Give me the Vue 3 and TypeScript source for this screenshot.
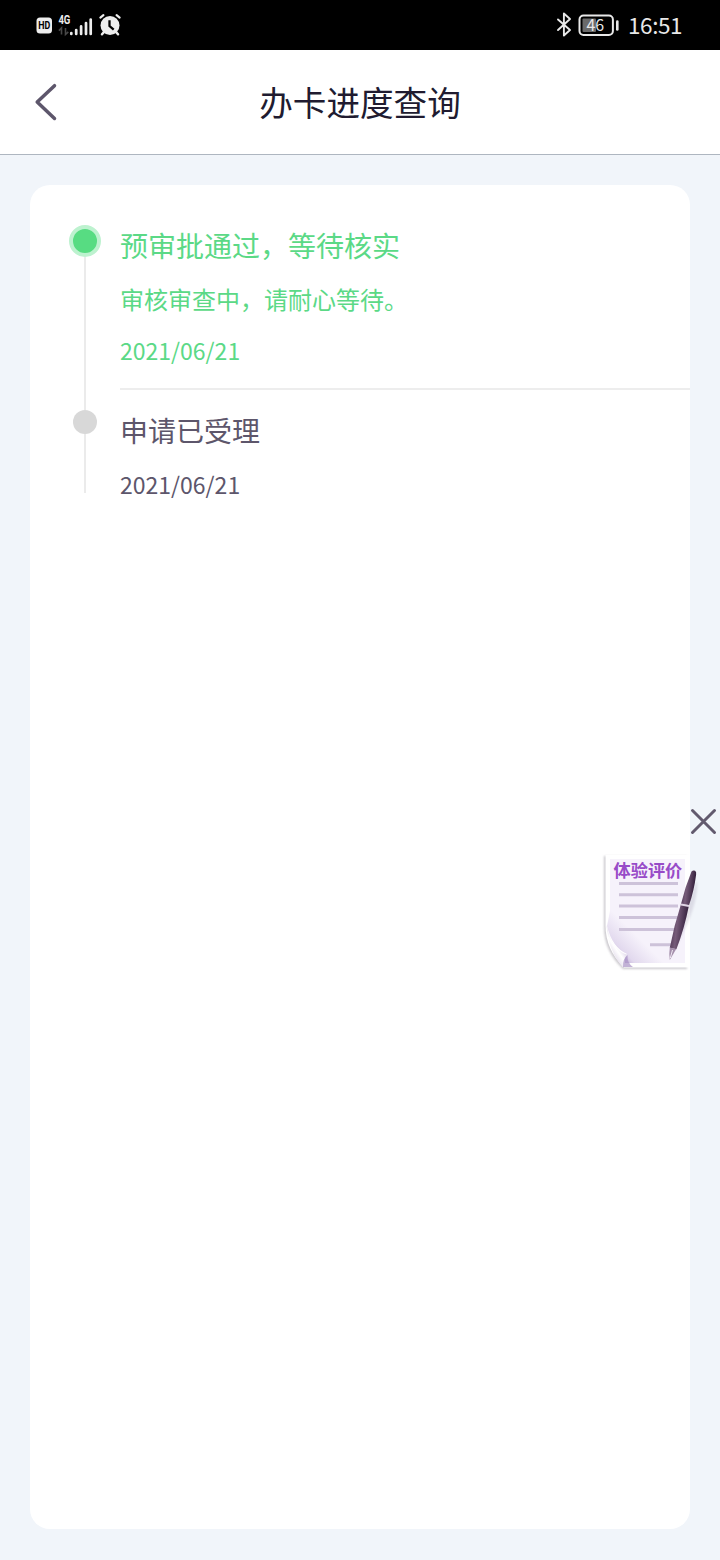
<script setup lang="ts">
import { ref } from 'vue'

interface Step {
  title: string
  detail?: string
  date: string
  active: boolean
}

const steps: Step[] = [
  { title: '预审批通过，等待核实', detail: '审核审查中，请耐心等待。', date: '2021/06/21', active: true },
  { title: '申请已受理', date: '2021/06/21', active: false },
]

const surveyVisible = ref(true)
</script>

<template>
  <div class="screen">
    <div class="status">
      <svg class="status-left" width="90" height="30" viewBox="0 0 90 30">
        <rect x="0.5" y="7.5" width="15.5" height="16" rx="3.5" fill="#ededed" />
        <text x="8.2" y="19" text-anchor="middle" class="hd" textLength="12" lengthAdjust="spacingAndGlyphs">HD</text>
        <text x="22.4" y="13.6" class="net" textLength="12" lengthAdjust="spacingAndGlyphs">4G</text>
        <path d="M25.5 24.5v-6.5l-2.6 2.6M29.5 18v6.5l2.8-2.6" fill="none" stroke="#484848" stroke-width="1.6" />
        <path d="M35.3 24v-1M40.2 24v-4M45.1 24v-7.6M50 24v-11M54.7 24v-14.5" stroke="#ededed" stroke-width="2.7" stroke-linecap="round" />
        <circle cx="74" cy="15.5" r="9.5" fill="#ededed" />
        <path d="M68 22l-2 2.3M80 22l2 2.3" stroke="#ededed" stroke-width="2.5" stroke-linecap="round" />
        <path d="M64.4 7.6l3-2.4M83.6 7.6l-3-2.4" fill="none" stroke="#ededed" stroke-width="2.2" stroke-linecap="round" />
        <path d="M73.5 10.3v5.7l4.2 3.7" fill="none" stroke="#000" stroke-width="2.3" />
      </svg>
      <div class="status-right">
        <svg width="64" height="30" viewBox="0 0 64 30">
          <path d="M2 9.5l12 10.5-6.1 5.5v-22l6.1 5.5-12 11" fill="none" stroke="#e8e8e8" stroke-width="1.9" stroke-linejoin="round" stroke-linecap="round" />
          <rect x="23.5" y="5.6" width="33.4" height="19.4" rx="4" fill="none" stroke="#e8e8e8" stroke-width="2" />
          <rect x="26.5" y="8.6" width="13.5" height="13.4" rx="1" fill="#6a6a6a" />
          <path d="M61.3 11.5v8" stroke="#e8e8e8" stroke-width="2.6" stroke-linecap="round" />
          <text x="39.3" y="21" text-anchor="middle" class="charge">46</text>
        </svg>
        <span class="clock">16:51</span>
      </div>
    </div>

    <header class="nav">
      <svg class="back" width="24" height="40" viewBox="0 0 24 40">
        <path d="M20.5 3.7L3.2 20l17.3 16.5" fill="none" stroke="#5d566b" stroke-width="3.5" stroke-linecap="round" stroke-linejoin="round" />
      </svg>
      <h1>办卡进度查询</h1>
    </header>

    <main class="body">
      <ol class="card">
        <li v-for="step in steps" :key="step.title" class="step" :class="{ active: step.active }">
          <div class="marker">
            <i class="dot"></i>
            <i class="rail"></i>
          </div>
          <div class="info">
            <h2>{{ step.title }}</h2>
            <p v-if="step.detail" class="detail">{{ step.detail }}</p>
            <time>{{ step.date }}</time>
          </div>
        </li>
      </ol>
    </main>

    <div v-if="surveyVisible" class="survey">
      <svg class="close" width="28" height="28" viewBox="0 0 28 28" @click="surveyVisible = false">
        <path d="M3.5 3.5l22 22M25.5 3.5l-22 22" stroke="#625a6e" stroke-width="3" stroke-linecap="round" />
      </svg>
      <svg class="paper" width="120" height="130" viewBox="600 845 120 130">
        <defs>
          <linearGradient id="sheet" gradientUnits="userSpaceOnUse" x1="608" y1="955" x2="632" y2="931">
            <stop offset="0" stop-color="#a58dc4" />
            <stop offset="0.4" stop-color="#e2d9ee" />
            <stop offset="1" stop-color="#f6f2fb" />
          </linearGradient>
          <linearGradient id="fold" gradientUnits="userSpaceOnUse" x1="610" y1="957" x2="626" y2="946">
            <stop offset="0" stop-color="#d9d0e4" />
            <stop offset="0.5" stop-color="#fff" />
            <stop offset="1" stop-color="#cbbedb" />
          </linearGradient>
          <linearGradient id="barrel" x1="0" y1="0" x2="1" y2="0.25">
            <stop offset="0" stop-color="#3d2845" />
            <stop offset="0.45" stop-color="#765b79" />
            <stop offset="1" stop-color="#2f1b37" />
          </linearGradient>
          <filter id="soft" x="-20%" y="-20%" width="140%" height="140%">
            <feGaussianBlur stdDeviation="1.3" />
          </filter>
        </defs>
        <path d="M604 856h83v113h-64q-19-18-19-42z" fill="#a9a5ad" opacity=".6" filter="url(#soft)" />
        <path d="M605.5 855H690v112.5h-66q-18.5-18-18.5-42z" fill="#fff" />
        <path d="M610 859h75v104h-60q-1-6 2-9-15-7-20-28l3-15z" fill="url(#sheet)" />
        <path d="M606.5 925q5 25 21 30-5 4-4.5 12.5-15-17-16.5-42.5z" fill="url(#fold)" />
        <path d="M627.5 955q-5 4-4.500 12h10q-6-4-5.500-12z" fill="#a892c4" opacity=".7" />
        <text x="613.5" y="876.5" class="survey-label">体验评价</text>
        <path d="M619 883.500h59M619 894.800h59M619 906h59M619 917.600h59M619 929.400h57M650 944.700h22" stroke="#cdc2d9" stroke-width="3" />
        <path d="M697 880q2 20-14 53l-9 17 8-31z" fill="#887a98" opacity=".2" filter="url(#soft)" />
        <path d="M691.500 871.500q1.500-1.700 3.600-.8 1.500.8 1 4-2 16-7.100 30.600l-8-1.300q4-17 10.500-32.500z" fill="url(#barrel)" />
        <path d="M681 904l8 1.300q-4.500 23-12.600 44l-6.600-1.500q4.200-22 11.200-43.800z" fill="url(#barrel)" />
        <path d="M681 904.500l8 1.500" stroke="#e0d4e4" stroke-width="1.800" />
        <path d="M669.800 947.500l6.400 1.500-6.400 11q-1-6 0-12.500z" fill="#a58fac" />
        <path d="M672.500 950l-2.200 8" stroke="#f0e9f3" stroke-width="1" />
      </svg>
    </div>
  </div>
</template>

<style>
body {
  margin: 0;
  background: #f1f5fa;
}
</style>

<style scoped>
.screen {
  position: relative;
  display: flex;
  flex-direction: column;
  width: 720px;
  height: 1560px;
  overflow: hidden;
  background: #f1f5fa;
  font-family: "Noto Sans CJK SC", "Noto Sans", sans-serif;
}

.status {
  display: flex;
  justify-content: space-between;
  box-sizing: border-box;
  height: 50px;
  padding: 10px 38px 10px 36px;
  background: #000;
  color: #e8e8e8;
}

.hd {
  font: 700 10px "Roboto", sans-serif;
  fill: #000;
}

.net {
  font: 700 12px "Roboto", sans-serif;
  fill: #ededed;
}

.charge {
  font: 16px "Noto Sans CJK SC", sans-serif;
  fill: #e8e8e8;
}

.status-right {
  display: flex;
  gap: 8px;
}

.clock {
  width: 54px;
  font-size: 22.5px;
  line-height: 29px;
  letter-spacing: -0.4px;
  white-space: nowrap;
}

.nav {
  display: grid;
  grid-template-columns: 24px 1fr 24px;
  align-items: center;
  box-sizing: border-box;
  height: 105px;
  padding: 0 34px;
  border-bottom: 1px solid #aeb6c0;
  background: #fff;
}

.nav h1 {
  margin: 0;
  color: #201b30;
  font-size: 33.6px;
  font-weight: 400;
  line-height: 50px;
  text-align: center;
}

.body {
  display: flex;
  flex: 1;
  padding: 30px 30px 31px;
}

.card {
  flex: 1;
  margin: 0;
  padding: 40px 0 0 39px;
  border-radius: 20px;
  background: #fff;
  list-style: none;
}

.step {
  display: flex;
  gap: 19px;
  color: #5d566b;
}

.step.active {
  color: #5bd986;
}

.marker {
  display: flex;
  flex-direction: column;
  align-items: center;
  width: 32px;
}

.dot {
  width: 24px;
  height: 24px;
  border-radius: 50%;
  background: #d8d8d8;
}

.active .dot {
  border: 4px solid #bdf2cf;
  background: #57dc82;
}

.rail {
  flex: 1;
  width: 2px;
  background: #ebebeb;
}

.step:last-child .rail {
  flex: 0 0 59px;
}

.info {
  display: flex;
  flex: 1;
  flex-direction: column;
  gap: 16px;
}

.active .info {
  margin-bottom: 19.5px;
  padding-bottom: 20px;
  border-bottom: 2px solid #ededed;
}

h2 {
  margin: 0;
  font-size: 28px;
  font-weight: 400;
  line-height: 40px;
}

.detail {
  margin: 0;
  font-size: 24px;
  line-height: 36px;
}

time {
  font-size: 23px;
  line-height: 36px;
}

.active time {
  margin-top: -1px;
}

.survey {
  position: absolute;
  top: 807px;
  right: 0;
  display: flex;
  flex-direction: column;
  align-items: flex-end;
  gap: 10px;
}

.close {
  margin-right: 3px;
}

.survey-label {
  font: 700 17.2px "Noto Sans CJK SC", sans-serif;
  fill: #984bc8;
}
</style>
